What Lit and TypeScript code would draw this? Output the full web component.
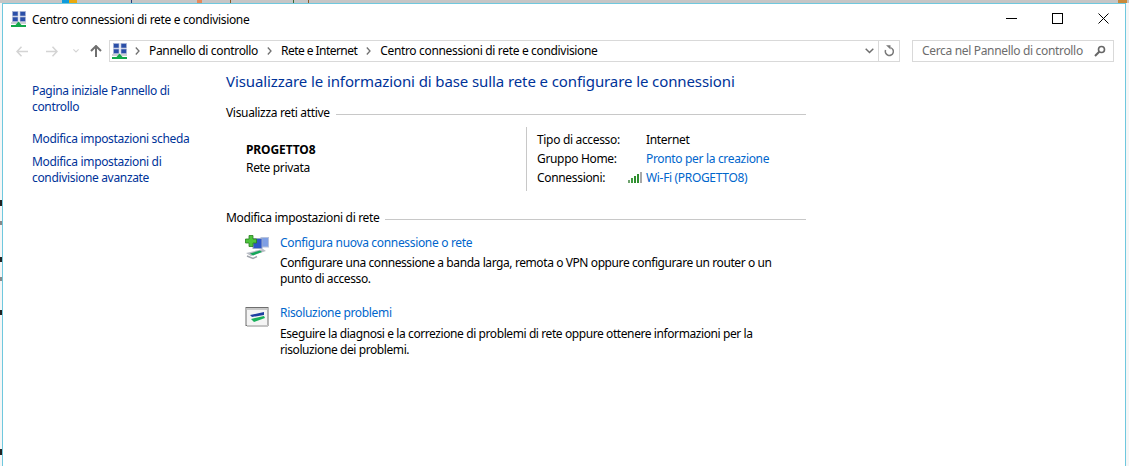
import { LitElement, html, css } from "lit";
import { customElement } from "lit/decorators.js";

const netIcon = html`<svg class="ico16" viewBox="0 0 16 16" width="16" height="16">
  <rect x="1.5" y="0.5" width="5.5" height="4.5" fill="#2b4fa8" stroke="#a9b4d4" stroke-width="0.7"/>
  <rect x="9" y="0.5" width="5.5" height="4.5" fill="#2b4fa8" stroke="#a9b4d4" stroke-width="0.7"/>
  <rect x="1.5" y="6" width="5.5" height="4.5" fill="#2b4fa8" stroke="#a9b4d4" stroke-width="0.7"/>
  <rect x="9" y="6" width="5.5" height="4.5" fill="#2b4fa8" stroke="#a9b4d4" stroke-width="0.7"/>
  <rect x="0" y="11.5" width="15" height="1" fill="#9aa0ac"/>
  <path d="M7.5 10.5 L10.5 14 H4.5 Z" fill="#12a84a"/>
  <rect x="0" y="14" width="15" height="2" fill="#12a84a"/>
</svg>`;

const topMarks = [
  { x: 62, w: 7, c: "#0e9bdc" },
  { x: 69, w: 8, c: "#eaa90e" },
  { x: 131, w: 1, c: "#2a3f7a" },
  { x: 197, w: 5, c: "#e8895a" },
  { x: 230, w: 1, c: "#8a5a2a" },
  { x: 293, w: 1, c: "#3a6a3a" },
  { x: 308, w: 1, c: "#8a5a2a" },
  { x: 1118, w: 9, c: "#c98a3a" },
];
const leftMarks = [
  { y: 200, h: 6, c: "#222" },
  { y: 221, h: 4, c: "#888" },
  { y: 257, h: 5, c: "#222" },
  { y: 277, h: 4, c: "#888" },
  { y: 310, h: 5, c: "#222" },
  { y: 449, h: 6, c: "#222" },
];

@customElement("app-root")
export class AppRoot extends LitElement {
  static styles = css`
    :host {
      display: block;
      position: relative;
      width: 1129px;
      height: 466px;
      overflow: hidden;
      background: #f6f6f6;
      font-family: "Noto Sans", "Open Sans", sans-serif;
      font-size: 12px;
      letter-spacing: -0.33px;
      color: #000;
    }
    .strip { height: 3px; background: #c6c6c6; display: block; }
    .mark { position: absolute; }
    .window {
      box-sizing: border-box;
      margin: 0 3px 0 2px;
      height: 463px;
      background: #fff;
      border: 1px solid #6fc8de;
      border-bottom: none;
      display: flex;
      flex-direction: column;
    }
    .titlebar {
      display: flex;
      align-items: center;
      height: 30px;
      padding-left: 8px;
      flex: none;
    }
    .titlebar .title {
      margin-left: 5px;
      flex: 1;
    }
    .winctl {
      display: flex;
      align-items: center;
      gap: 35px;
      margin: 0 16px 2px 0;
    }
    .winctl svg { display: block; }
    .ico16 { display: block; flex: none; }
    .nav {
      display: flex;
      align-items: center;
      height: 22px;
      margin-top: 6px;
      flex: none;
    }
    .navbtns {
      display: flex;
      align-items: center;
      width: 106px;
      padding-left: 13px;
      box-sizing: border-box;
    }
    .navbtns svg { display: block; flex: none; }
    .b1 { margin-right: 18px; }
    .b2 { margin-right: 15px; }
    .b3 { margin-right: 11px; }
    .addr {
      box-sizing: border-box;
      width: 791px;
      height: 22px;
      border: 1px solid #d9d9d9;
      display: flex;
      align-items: center;
      padding-left: 2px;
    }
    .crumb { white-space: nowrap; padding-bottom: 2px; }
    .crumb.tight { letter-spacing: -0.55px; }
    .chev { flex: none; display: block; margin: 0 9px; }
    .chev.first { margin-left: 7px; }
    .addr .spacer { flex: 1; }
    .addr .refresh {
      width: 20px;
      height: 20px;
      border-left: 1px solid #d9d9d9;
      display: flex;
      align-items: center;
      justify-content: center;
    }
    .addr .drop { margin-right: 4px; display: block; }
    .search {
      box-sizing: border-box;
      margin-left: 12px;
      width: 202px;
      height: 22px;
      border: 1px solid #d9d9d9;
      display: flex;
      align-items: center;
      justify-content: space-between;
      padding: 0 7px 0 9px;
      color: #6d6d6d;
      white-space: nowrap;
    }
    .search span { padding-bottom: 2px; }
    .body {
      display: flex;
      flex: 1;
      min-height: 0;
    }
    .side {
      box-sizing: border-box;
      width: 223px;
      padding: 21px 0 0 29px;
      flex: none;
      display: flex;
      flex-direction: column;
      color: #003399;
    }
    .side a { display: block; line-height: 16px; width: 170px; }
    .side a + a { margin-top: 16px; }
    .side a.tight { margin-top: 7px; }
    .main {
      width: 580px;
      padding-top: 7px;
      box-sizing: border-box;
    }
    h1 {
      margin: 0;
      font-size: 15px;
      font-weight: 400;
      letter-spacing: -0.1px;
      line-height: 24px;
      color: #003399;
      white-space: nowrap;
    }
    .sect {
      display: flex;
      align-items: center;
      gap: 6px;
      line-height: 16px;
      white-space: nowrap;
    }
    .sect::after { content: ""; flex: 1; height: 1px; background: #c8c8c8; margin-top: 2px; }
    .s1 { margin-top: 12px; }
    .s2 { margin-top: 19px; }
    .net {
      display: flex;
      height: 64px;
      margin-top: 6px;
    }
    .netname {
      width: 300px;
      padding: 14px 0 0 20px;
      box-sizing: border-box;
      line-height: 18px;
    }
    .netname b { display: block; font-weight: 700; letter-spacing: -0.1px; }
    .info {
      border-left: 1px solid #c8c8c8;
      padding: 0 0 2px 10px;
      display: grid;
      grid-template-columns: 109px auto;
      grid-auto-rows: 19px;
      line-height: 19px;
      align-content: center;
      white-space: nowrap;
    }
    .link { color: #0066cc; }
    .wifi { position: relative; }
    .signal { position: absolute; left: -18px; top: 4px; display: block; }
    .task {
      display: flex;
      margin-left: 19px;
    }
    .task svg { flex: none; display: block; }
    .tasktext { margin-left: 10px; line-height: 16px; width: 500px; letter-spacing: -0.41px; }
    .tasktext .link { display: block; line-height: 16px; letter-spacing: -0.33px; }
    .t1 { margin-top: 9px; }
    .t1 .link { margin-bottom: 4px; }
    .t2 { margin-top: 18px; }
    .t2 .link { margin-bottom: 5px; }
  `;

  render() {
    const chev = (first = false) => html`<svg class="chev ${first ? "first" : ""}" width="5" height="8" viewBox="0 0 5 8"><path d="M0.8 0.5 L4 4 L0.8 7.5" fill="none" stroke="#707070" stroke-width="1.3"/></svg>`;
    return html`
      <div class="strip"></div>
      ${topMarks.map((m) => html`<span class="mark" style="left:${m.x}px;top:0;width:${m.w}px;height:3px;background:${m.c}"></span>`)}
      ${leftMarks.map((m) => html`<span class="mark" style="left:0;top:${m.y}px;width:2px;height:${m.h}px;background:${m.c}"></span>`)}
      <div class="window">
        <div class="titlebar">
          ${netIcon}
          <span class="title">Centro connessioni di rete e condivisione</span>
          <div class="winctl">
            <svg width="11" height="11" viewBox="0 0 11 11"><rect x="0" y="5" width="11" height="1" fill="#000"/></svg>
            <svg width="11" height="11" viewBox="0 0 11 11"><rect x="0.5" y="0.5" width="10" height="10" fill="none" stroke="#000"/></svg>
            <svg width="11" height="11" viewBox="0 0 11 11"><path d="M0.5 0.5 L10.5 10.5 M10.5 0.5 L0.5 10.5" stroke="#000" fill="none"/></svg>
          </div>
        </div>
        <div class="nav">
          <div class="navbtns">
            <svg class="b1" width="12" height="11" viewBox="0 0 12 11"><path d="M5.5 0.7 L1 5.5 L5.5 10.3 M1 5.5 H12" fill="none" stroke="#d4d4d4" stroke-width="1.5"/></svg>
            <svg class="b2" width="12" height="11" viewBox="0 0 12 11"><path d="M6.5 0.7 L11 5.5 L6.5 10.3 M11 5.5 H0" fill="none" stroke="#d4d4d4" stroke-width="1.5"/></svg>
            <svg class="b3" width="6" height="4" viewBox="0 0 6 4"><path d="M0.4 0.4 L3 3 L5.6 0.4" fill="none" stroke="#d4d4d4" stroke-width="1.1"/></svg>
            <svg width="12" height="12" viewBox="0 0 12 12"><path d="M1 6 L6 1 L11 6 M6 1 V12" fill="none" stroke="#707070" stroke-width="2"/></svg>
          </div>
          <div class="addr">
            ${netIcon}
            ${chev(true)}<span class="crumb">Pannello di controllo</span>
            ${chev()}<span class="crumb tight">Rete e Internet</span>
            ${chev()}<span class="crumb">Centro connessioni di rete e condivisione</span>
            <span class="spacer"></span>
            <svg class="drop" width="9" height="6" viewBox="0 0 9 6"><path d="M0.7 0.7 L4.5 4.5 L8.3 0.7" fill="none" stroke="#6e6e6e" stroke-width="1.5"/></svg>
            <div class="refresh">
              <svg width="10" height="12" viewBox="0 0 10 12"><path d="M6.5 2.6 A4 4 0 1 1 1.6 5" fill="none" stroke="#7a7a7a" stroke-width="1.5"/><path d="M2 0.3 H6.5 V4.5 Z" fill="#7a7a7a"/></svg>
            </div>
          </div>
          <div class="search">
            <span>Cerca nel Pannello di controllo</span>
            <svg width="12" height="12" viewBox="0 0 12 12"><circle cx="7.5" cy="4.5" r="3" fill="none" stroke="#666" stroke-width="1.6"/><path d="M5.2 6.8 L1 11" stroke="#666" stroke-width="2"/></svg>
          </div>
        </div>
        <div class="body">
          <nav class="side">
            <a>Pagina iniziale Pannello di controllo</a>
            <a>Modifica impostazioni scheda</a>
            <a class="tight">Modifica impostazioni di condivisione avanzate</a>
          </nav>
          <main class="main">
            <h1>Visualizzare le informazioni di base sulla rete e configurare le connessioni</h1>
            <div class="sect s1">Visualizza reti attive</div>
            <div class="net">
              <div class="netname"><b>PROGETTO8</b>Rete privata</div>
              <div class="info">
                <span>Tipo di accesso:</span><span>Internet</span>
                <span>Gruppo Home:</span><span class="link">Pronto per la creazione</span>
                <span>Connessioni:</span>
                <span class="link wifi">
                  <svg class="signal" width="14" height="11" viewBox="0 0 14 11">
                    <rect x="0" y="8" width="2" height="3" fill="#6fa36f"/>
                    <rect x="3" y="6" width="2" height="5" fill="#3f9a3f"/>
                    <rect x="6" y="4" width="2" height="7" fill="#2f8f2f"/>
                    <rect x="9" y="2" width="2" height="9" fill="#2f8f2f"/>
                    <rect x="12" y="0" width="2" height="11" fill="#a8a8a8"/>
                  </svg>Wi-Fi (PROGETTO8)</span>
              </div>
            </div>
            <div class="sect s2">Modifica impostazioni di rete</div>
            <div class="task t1">
              <svg width="25" height="25" viewBox="0 0 25 25">
                <rect x="16" y="2.5" width="7.5" height="9.5" fill="#7f9fe4" stroke="#b6c2dc"/>
                <rect x="8" y="3.5" width="9" height="10" fill="#2d56c8" stroke="#9aa8c8"/>
                <path d="M4 0.5 H8 V4 H11.5 V8 H8 V11.5 H4 V8 H0.5 V4 H4 Z" fill="#4cc43c" stroke="#2a7f22" stroke-width="0.8"/>
                <path d="M1 18 L18 14 L21 16 L6 21 Z" fill="#b8bcc4"/>
                <path d="M5 18.5 L15 15.5 L17 17 L8 20.5 Z" fill="#14a85a"/>
                <path d="M2 21 L8 23.5 L12 21.5" fill="none" stroke="#a0a4ac" stroke-width="1.4"/>
              </svg>
              <div class="tasktext"><span class="link">Configura nuova connessione o rete</span>Configurare una connessione a banda larga, remota o VPN oppure configurare un router o un punto di accesso.</div>
            </div>
            <div class="task t2">
              <svg width="25" height="25" viewBox="0 0 25 25">
                <rect x="1" y="2.5" width="22" height="18" fill="#f4f4f4" stroke="#6e6e6e"/>
                <rect x="1.5" y="3" width="21" height="2" fill="#c8c8c8"/>
                <path d="M5 10 L19 7 V10 L7 12 Z" fill="#1d3fa0"/>
                <path d="M6 14 L19 11 L20 13 L9 17 Z" fill="#18b05a"/>
                <rect x="2" y="20" width="21" height="2" fill="#c4c4c4"/>
              </svg>
              <div class="tasktext"><span class="link">Risoluzione problemi</span>Eseguire la diagnosi e la correzione di problemi di rete oppure ottenere informazioni per la risoluzione dei problemi.</div>
            </div>
          </main>
        </div>
      </div>
    `;
  }
}
